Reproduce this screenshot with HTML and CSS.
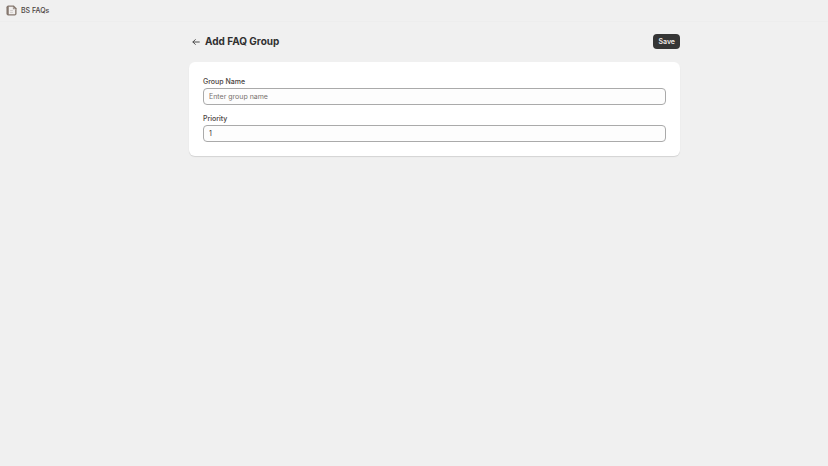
FILE: index.html
```
<!DOCTYPE html>
<html lang="en">
<head>
    <meta charset="UTF-8">
    <meta name="viewport" content="width=device-width, initial-scale=1.0">
    <title>BS FAQs</title>
    <link rel="stylesheet" href="styles.css">
</head>
<body>
    <header class="app-bar">
        <svg class="app-icon" viewBox="0 0 12 12" aria-hidden="true">
            <path d="M2.5 0.5h6l3 3v6q0 2-2 2h-7q-2 0-2-2v-7q0-2 2-2z" fill="#85776e"/>
            <path d="M3 2h4.5l2.5 2.5v5.5h-7z" fill="#f1efee"/>
            <path d="M7.5 2v2.5h2.5z" fill="#a2968f"/>
            <path d="M4.5 6h3M4.5 8h3" stroke="#c4bfbb" stroke-width="0.8"/>
        </svg>
        <span>BS FAQs</span>
    </header>
    <main class="content">
        <form class="page" id="groupForm">
            <div class="page-header">
                <a href="#" class="back-link" aria-label="Back">
                    <svg viewBox="0 0 8 8" aria-hidden="true">
                        <path d="M7.3 4H1M3.3 1.6L0.9 4l2.4 2.4" fill="none" stroke="#4a4a4a" stroke-width="1" stroke-linecap="round" stroke-linejoin="round"/>
                    </svg>
                </a>
                <h1>Add FAQ Group</h1>
                <button type="submit" class="save-button">Save</button>
            </div>
            <div class="card">
                <div class="field">
                    <label for="groupName">Group Name</label>
                    <input type="text" id="groupName" name="groupName" placeholder="Enter group name">
                </div>
                <div class="field">
                    <label for="priority">Priority</label>
                    <input type="text" inputmode="numeric" id="priority" name="priority" value="1">
                </div>
            </div>
        </form>
    </main>
</body>
</html>
```

FILE: styles.css
```
* {
    box-sizing: border-box;
}
body {
    margin: 0;
    font-family: Inter, "Liberation Sans", sans-serif;
    font-size: 7px;
    color: #303030;
    background-color: #f0f0f0;
}
.app-bar {
    display: flex;
    align-items: center;
    gap: 4px;
    height: 22px;
    padding: 0 6px;
    border-bottom: 1px solid #ededed;
    font-weight: 500;
    line-height: 12px;
    color: #4a4340;
}
.app-icon {
    width: 11px;
    height: 11px;
}
.content {
    padding: 12px 8px 12px 49px;
}
.page {
    max-width: 491px;
    margin: 0 auto;
}
.page-header {
    display: flex;
    align-items: center;
    height: 15px;
    margin-bottom: 13px;
    padding-left: 3px;
}
.back-link {
    display: flex;
    margin-right: 5px;
}
.back-link svg {
    width: 8px;
    height: 8px;
}
h1 {
    margin: 0;
    font-size: 10px;
    font-weight: 700;
    line-height: 15px;
}
.save-button {
    height: 15px;
    margin-left: auto;
    padding: 0 5px;
    border: none;
    border-radius: 4px;
    background-color: #353535;
    color: #f0e9e6;
    font: inherit;
    font-weight: 600;
    cursor: pointer;
}
.card {
    display: flex;
    flex-direction: column;
    gap: 9px;
    padding: 15px 14px 14px;
    border-radius: 6px;
    background-color: #fff;
    box-shadow: 0 1px 1px rgba(0, 0, 0, 0.12);
}
.field {
    display: flex;
    flex-direction: column;
    gap: 1px;
}
label {
    font-weight: 500;
    line-height: 10px;
    color: #4a4340;
}
input {
    width: 100%;
    height: 17px;
    padding: 0 5px;
    border: 1px solid #aaa;
    border-radius: 4px;
    background-color: #fdfdfd;
    color: #303030;
    font: inherit;
}
input::placeholder {
    color: #77706c;
    opacity: 1;
}
```
